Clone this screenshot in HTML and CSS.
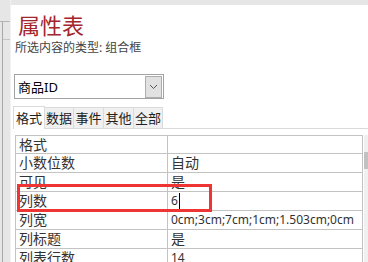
FILE: index.html
```html
<!DOCTYPE html>
<html lang="zh-CN">
<head>
<meta charset="UTF-8" />
<meta name="viewport" content="width=device-width, initial-scale=1" />
<title>属性表</title>
<link rel="stylesheet" href="styles.css">
</head>
<body>

<div class="frame">
    <div class="gutter">
        <div class="gutter-top"></div>
        <div class="gutter-rest">
            <div class="gutter-cell"></div>
        </div>
    </div>

    <div class="panel">
        <h1 class="title">属性表</h1>
        <p class="subtitle">所选内容的类型: 组合框</p>

        <div class="combo">
            <span class="combo-text">商品ID</span>
            <span class="combo-btn">
                <svg width="9" height="6" viewBox="0 0 9 6"><path d="M1 1 L4.5 4.5 L8 1" fill="none" stroke="#555" stroke-width="1"/></svg>
            </span>
        </div>

        <div class="tabs">
            <div class="tab active">格式</div>
            <div class="tab">数据</div>
            <div class="tab">事件</div>
            <div class="tab">其他</div>
            <div class="tab">全部</div>
        </div>

        <div class="sheet">
            <div class="grid">
                <div class="row"><div class="name">格式</div><div class="value"></div></div>
                <div class="row"><div class="name">小数位数</div><div class="value">自动</div></div>
                <div class="row"><div class="name">可见</div><div class="value">是</div></div>
                <div class="row"><div class="name">列数</div><div class="value"><span class="latin">6</span><span class="caret"></span></div></div>
                <div class="row"><div class="name">列宽</div><div class="value"><span class="latin">0cm;3cm;7cm;1cm;1.503cm;0cm</span></div></div>
                <div class="row"><div class="name">列标题</div><div class="value">是</div></div>
                <div class="row"><div class="name">列表行数</div><div class="value"><span class="latin">14</span></div></div>
                <div class="mark"></div>
            </div>
            <div class="scrollbar"><div class="thumb"></div></div>
        </div>
    </div>
</div>

</body>
</html>
```

FILE: styles.css
```css
body {
    margin: 0;
    background: #e6e6e6;
    font-family: "Noto Sans", "Noto Sans CJK SC", sans-serif;
    overflow: hidden;
    height: 262px;
}
.frame {
    display: flex;
    height: 262px;
}
.gutter {
    flex-shrink: 0;
    width: 10px;
    border-right: 1px solid #f2f2f2;
}
.gutter-top {
    height: 21px;
    border-bottom: 1px solid #b4b4b4;
}
.gutter-rest {
    margin-left: 2px;
    height: 240px;
    border-left: 1px solid #a8a8a8;
}
.gutter-cell {
    height: 17px;
    border-bottom: 1px solid #c4c4c4;
}
.panel {
    flex: 1;
    min-width: 0;
    overflow: hidden;
    margin-top: 5px;
    background: #fff;
    padding-left: 3px;
}
.title {
    margin: 7px 0 0 4px;
    font-size: 22px;
    line-height: 26px;
    font-weight: normal;
    color: #a4262c;
}
.subtitle {
    margin: 2px 0 0 1px;
    font-size: 12px;
    line-height: 16px;
    color: #444;
}
.combo {
    margin-top: 18px;
    width: 150px;
    height: 25px;
    box-sizing: border-box;
    border: 1px solid #a3a3a3;
    display: flex;
    align-items: center;
    justify-content: space-between;
    padding: 0 1px 0 3px;
}
.combo-text {
    font-size: 13px;
    color: #000;
}
.combo-btn {
    width: 17px;
    height: 22px;
    box-sizing: border-box;
    background: #e1e1e1;
    border: 1px solid #adadad;
    display: flex;
    align-items: center;
    justify-content: center;
}
.tabs {
    margin-top: 7px;
    margin-left: -1px;
    height: 22px;
    display: flex;
    align-items: flex-end;
    border-bottom: 1px solid #d9d9d9;
}
.tab {
    height: 21px;
    box-sizing: border-box;
    padding: 0 1px;
    background: #f0f0f0;
    border: 1px solid #dadada;
    border-left: none;
    border-bottom: none;
    font-size: 13px;
    line-height: 20px;
    color: #222;
    text-align: center;
    width: 29px;
}
.tab.active {
    width: 32px;
    height: 23px;
    margin-bottom: -1px;
    background: #fff;
    border-left: 1px solid #dadada;
    line-height: 22px;
}
.tab:nth-child(3), .tab:nth-child(4) {
    width: 30px;
}
.sheet {
    margin-top: 6px;
    margin-left: 1px;
    display: flex;
}
.grid {
    position: relative;
    flex-shrink: 0;
    width: 348px;
    box-sizing: border-box;
    border: 1px solid #c3c3c3;
    border-bottom: none;
}
.row {
    display: flex;
    height: 19px;
    box-sizing: border-box;
    border-bottom: 1px solid #c3c3c3;
    font-size: 14px;
    line-height: 18px;
    color: #333;
}
.row:first-child {
    height: 18px;
}
.row:first-child .name, .row:first-child .value {
    line-height: 17px;
}
.name {
    width: 152px;
    padding-left: 3px;
    box-sizing: border-box;
    border-right: 1px solid #c3c3c3;
    white-space: nowrap;
}
.value {
    flex: 1;
    padding-left: 3px;
    white-space: nowrap;
    display: flex;
    align-items: center;
}
.latin {
    font-size: 12px;
}
.caret {
    display: inline-block;
    width: 1px;
    height: 16px;
    background: #000;
    margin-left: 1px;
}
/* red annotation box over the 列数 row */
.mark {
    position: absolute;
    left: 1px;
    top: 48px;
    width: 195px;
    height: 28px;
    box-sizing: border-box;
    border: 3px solid #ef3434;
}
.scrollbar {
    flex-shrink: 0;
    margin-left: 1px;
    width: 17px;
    height: 130px;
    background: #f0f0f0;
}
.thumb {
    margin-top: 17px;
    height: 17px;
    width: 7px;
    background: #c2c2c2;
}
```
